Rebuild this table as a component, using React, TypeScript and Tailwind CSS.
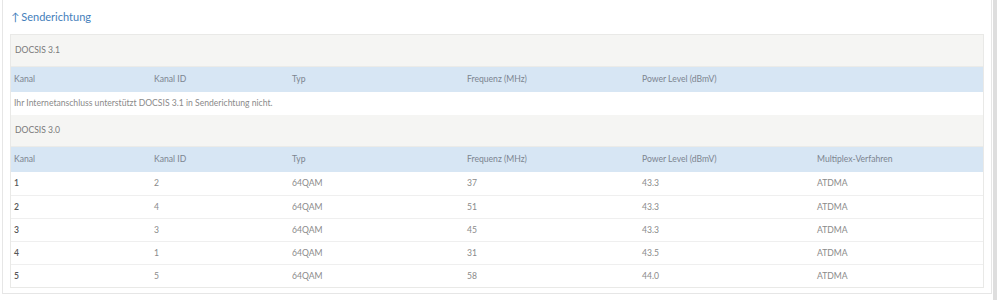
const cols = ["Kanal", "Kanal ID", "Typ", "Frequenz (MHz)", "Power Level (dBmV)"];

const rows = [
  ["1", "2", "64QAM", "37", "43.3", "ATDMA"],
  ["2", "4", "64QAM", "51", "43.3", "ATDMA"],
  ["3", "3", "64QAM", "45", "43.3", "ATDMA"],
  ["4", "1", "64QAM", "31", "43.5", "ATDMA"],
  ["5", "5", "64QAM", "58", "44.0", "ATDMA"],
];

const grid = "grid grid-cols-[140px_138px_175px_175px_175px_1fr]";

function SectionTitle({ label }: { label: string }) {
  return (
    <div className="h-[32px] bg-[#f5f5f3] border-b border-[#ebebe8] flex items-center px-[4px] text-[#7a7a7a]">
      {label}
    </div>
  );
}

function HeaderRow({ labels }: { labels: string[] }) {
  return (
    <div className={`${grid} h-[25px] items-center bg-[#d7e6f4] text-[#7c8590]`}>
      {labels.map((l) => (
        <div key={l} className="px-[3px]">
          {l}
        </div>
      ))}
    </div>
  );
}

export default function App() {
  return (
    <div className="w-[998px] h-[300px] bg-white flex font-['Lato',sans-serif]">
      <div className="flex-1 ml-[2px] mr-[1px] h-[294px] border-l border-r border-b border-[#e6e6e6] px-[7px]">
        <div className="h-[34px] flex items-center text-[11px] text-[#4580bb] pl-[1px]">
          <span className="mr-[2px]">↑</span>
          <span>Senderichtung</span>
        </div>
        <div className="border border-[#e9e9e7] text-[8.6px]">
          <SectionTitle label="DOCSIS 3.1" />
          <HeaderRow labels={cols} />
          <div className="h-[23px] flex items-center px-[3px] text-[#8a8a8a]">
            Ihr Internetanschluss unterstützt DOCSIS 3.1 in Senderichtung nicht.
          </div>
          <SectionTitle label="DOCSIS 3.0" />
          <HeaderRow labels={[...cols, "Multiplex-Verfahren"]} />
          {rows.map((r, i) => (
            <div
              key={i}
              className={`${grid} h-[23px] items-center ${i > 0 ? "border-t border-[#efefef]" : ""}`}
            >
              {r.map((c, j) => (
                <div
                  key={j}
                  className={`px-[3px] ${j === 0 ? "text-[#555] font-semibold" : "text-[#8a8a8a]"}`}
                >
                  {c}
                </div>
              ))}
            </div>
          ))}
        </div>
      </div>
      <div className="w-[4px] h-full bg-[#dedede] mr-[1px]" />
    </div>
  );
}
